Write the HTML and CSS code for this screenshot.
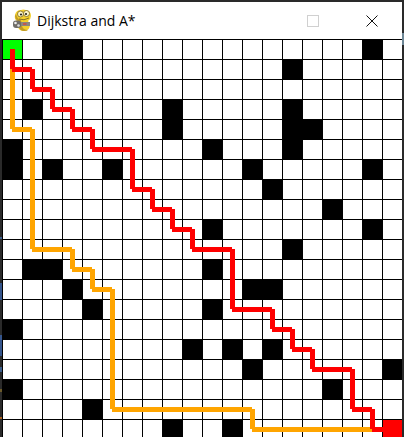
FILE: index.html
```html
<!DOCTYPE html>
<html lang="en">
<head>
  <meta charset="UTF-8">
  <meta name="viewport" content="width=device-width, initial-scale=1.0">
  <title>Dijkstra and A*</title>
  <link rel="stylesheet" href="styles.css">
</head>
<body>
  <div class="window">
    <!-- Title bar -->
    <header class="titlebar">
      <svg class="app-icon" viewBox="10 7 22 27" width="22" height="27" aria-hidden="true">
        <path d="M15 15 Q16 10 21 10 Q23 9 26 10 Q31 11 31 16 Q31 19 28 21 L30 24 Q30 31 24 31 Q19 31 18 27 L17 21 Q14 19 15 15 Z" fill="#f4d02c"/>
        <path d="M15 16 Q15 19 18 21 L19 27 Q20 31 24 31 Q27 31 28 30 Q23 30 22 26 L21 20 Q17 19 16 14 Z" fill="#c09a26"/>
        <circle cx="20.5" cy="14" r="3" fill="#fdf6c8" stroke="#7a6420" stroke-width="0.8"/>
        <circle cx="26.5" cy="13.5" r="3" fill="#fdf6c8" stroke="#7a6420" stroke-width="0.8"/>
        <circle cx="21" cy="14.5" r="1.1" fill="#222"/>
        <circle cx="26" cy="14" r="1.1" fill="#222"/>
        <path d="M19 19 Q24 21 29 18" fill="none" stroke="#7a6420" stroke-width="0.9"/>
        <rect x="13" y="20.5" width="8" height="7.5" rx="3" fill="#6f6d68"/>
        <circle cx="15.5" cy="23" r="1.3" fill="#eee"/>
        <circle cx="18.5" cy="25.5" r="1.3" fill="#ddd"/>
        <rect x="21" y="22" width="9" height="4" fill="#8c8880"/>
        <rect x="23" y="23" width="3.5" height="2" fill="#c25a50"/>
      </svg>
      <span class="title">Dijkstra and A*</span>
      <span class="win-btn win-max"></span>
      <svg class="win-btn win-close" viewBox="0 0 12 12" width="12" height="12" aria-hidden="true">
        <path d="M0.5 0.5 L11.5 11.5 M11.5 0.5 L0.5 11.5" stroke="#111" stroke-width="1" fill="none"/>
      </svg>
    </header>

    <!-- Grid with the two paths over it -->
    <main class="board">
      <div id="grid" class="grid"></div>
      <svg class="paths" viewBox="2 39 400 400" width="400" height="400" aria-hidden="true">
        <path id="path-astar" class="path path-orange"></path>
        <path id="path-dijkstra" class="path path-red"></path>
      </svg>
    </main>
  </div>

  <script src="main.js"></script>
</body>
</html>
```

FILE: styles.css
```css
/* General styling */
html, body {
  margin: 0;
  padding: 0;
  height: 100%;
}

body {
  overflow: hidden;
  font-family: 'Open Sans', 'Noto Sans', sans-serif;
  background-color: #2a2a2a;
}

/* Window frame, the left edge shows a bit of the desktop behind it */
.window {
  height: 437px;
  padding: 2px 2px 0 2px;
  box-sizing: border-box;
  overflow: hidden;
  background:
    linear-gradient(#2a2a2a 33px, #6d8796 33px, #6d8796 45px, #2a2a2a 45px) right top / 2px 100% no-repeat,
    linear-gradient(#2a2a2a 237px, #3d5f8c 237px, #3d5f8c 239px, #2a2a2a 239px,
      #2a2a2a 283px, #35558c 283px, #35558c 300px, #2a2a2a 300px,
      #2a2a2a 335px, #35558c 335px, #35558c 356px, #2a2a2a 356px,
      #2a2a2a 367px, #3d5f8c 367px, #3d5f8c 372px, #2a2a2a 372px,
      #2a2a2a 389px, #6b5a2a 389px, #6b5a2a 392px, #2a2a2a 392px,
      #2a2a2a 417px, #a8601e 417px, #a8601e 419px, #2a2a2a 419px) left top / 2px 100% no-repeat,
    #2a2a2a;
}

/* Title bar */
.titlebar {
  display: flex;
  align-items: center;
  height: 37px;
  background-color: #fff;
  box-sizing: border-box;
  padding-left: 8px;
}

.app-icon {
  flex: none;
}

.title {
  margin-left: 5px;
  flex: 1;
  font-size: 14px;
  color: #000;
  white-space: nowrap;
}

.win-btn {
  flex: none;
  display: block;
}

.win-max {
  width: 12px;
  height: 12px;
  box-sizing: border-box;
  border: 1px solid #d0d0d0;
}

.win-close {
  margin-left: 47px;
  margin-right: 24px;
}

/* Board */
.board {
  position: relative;
  width: 400px;
  height: 400px;
}

.grid {
  display: grid;
  grid-template-columns: repeat(20, 19px);
  grid-auto-rows: 19px;
  gap: 1px;
  padding: 1px 0 0 1px;
  background-color: #000;
}

.cell {
  background-color: #fff;
}

.cell.wall {
  background-color: #000;
}

.cell.start {
  background-color: #00ff00;
}

.cell.end {
  background-color: #ff0000;
}

/* Paths */
.paths {
  position: absolute;
  top: 0;
  left: 0;
}

.path {
  fill: none;
  stroke-width: 5;
}

.path-orange {
  stroke: #ffa500;
}

.path-red {
  stroke: #ff0000;
}
```

FILE: main.js
```js
// [row, column] of every blocked cell
const walls = [
  [0, 2], [0, 3], [0, 18],
  [1, 14],
  [3, 1], [3, 8], [3, 14],
  [4, 8], [4, 14], [4, 15],
  [5, 0], [5, 10], [5, 14],
  [6, 0], [6, 2], [6, 5], [6, 12], [6, 18],
  [7, 13],
  [8, 16],
  [9, 10], [9, 18],
  [10, 14],
  [11, 1], [11, 2], [11, 10],
  [12, 3], [12, 12], [12, 13],
  [13, 4], [13, 10],
  [14, 0],
  [15, 9], [15, 11], [15, 13],
  [16, 12], [16, 19],
  [17, 0], [17, 16],
  [18, 4],
  [19, 8], [19, 11]
];

// Corner points of each route, in page pixels
const astar = [
  [12, 49], [12, 129], [32, 129], [32, 249], [72, 249], [72, 269], [92, 269],
  [92, 289], [112, 289], [112, 409], [252, 409], [252, 429], [392, 429]
];

const dijkstra = [
  [12, 49], [12, 69], [32, 69], [32, 89], [52, 89], [52, 109], [72, 109],
  [72, 129], [92, 129], [92, 149], [132, 149], [132, 189], [152, 189],
  [152, 209], [172, 209], [172, 229], [192, 229], [192, 249], [232, 249],
  [232, 309], [272, 309], [272, 329], [292, 329], [292, 349], [312, 349],
  [312, 369], [352, 369], [352, 409], [372, 409], [372, 429], [392, 429]
];

function buildGrid() {
  const grid = document.getElementById('grid');
  const blocked = new Set(walls.map(w => w[0] + ',' + w[1]));

  for (let row = 0; row < 20; row++) {
    for (let col = 0; col < 20; col++) {
      const cell = document.createElement('div');
      cell.className = 'cell';
      if (blocked.has(row + ',' + col)) cell.classList.add('wall');
      if (row === 0 && col === 0) cell.classList.add('start');
      if (row === 19 && col === 19) cell.classList.add('end');
      grid.appendChild(cell);
    }
  }
}

// Every leg is its own subpath so the corners stay square-notched
function routeToPath(points) {
  let d = '';
  for (let i = 1; i < points.length; i++) {
    const [x1, y1] = points[i - 1];
    const [x2, y2] = points[i];
    if (x1 === x2) {
      d += `M${x1 + 0.5} ${y1}V${y2}`;
    } else {
      d += `M${x1} ${y1 + 0.5}H${x2}`;
    }
  }
  return d;
}

buildGrid();
document.getElementById('path-astar').setAttribute('d', routeToPath(astar));
document.getElementById('path-dijkstra').setAttribute('d', routeToPath(dijkstra));
```
